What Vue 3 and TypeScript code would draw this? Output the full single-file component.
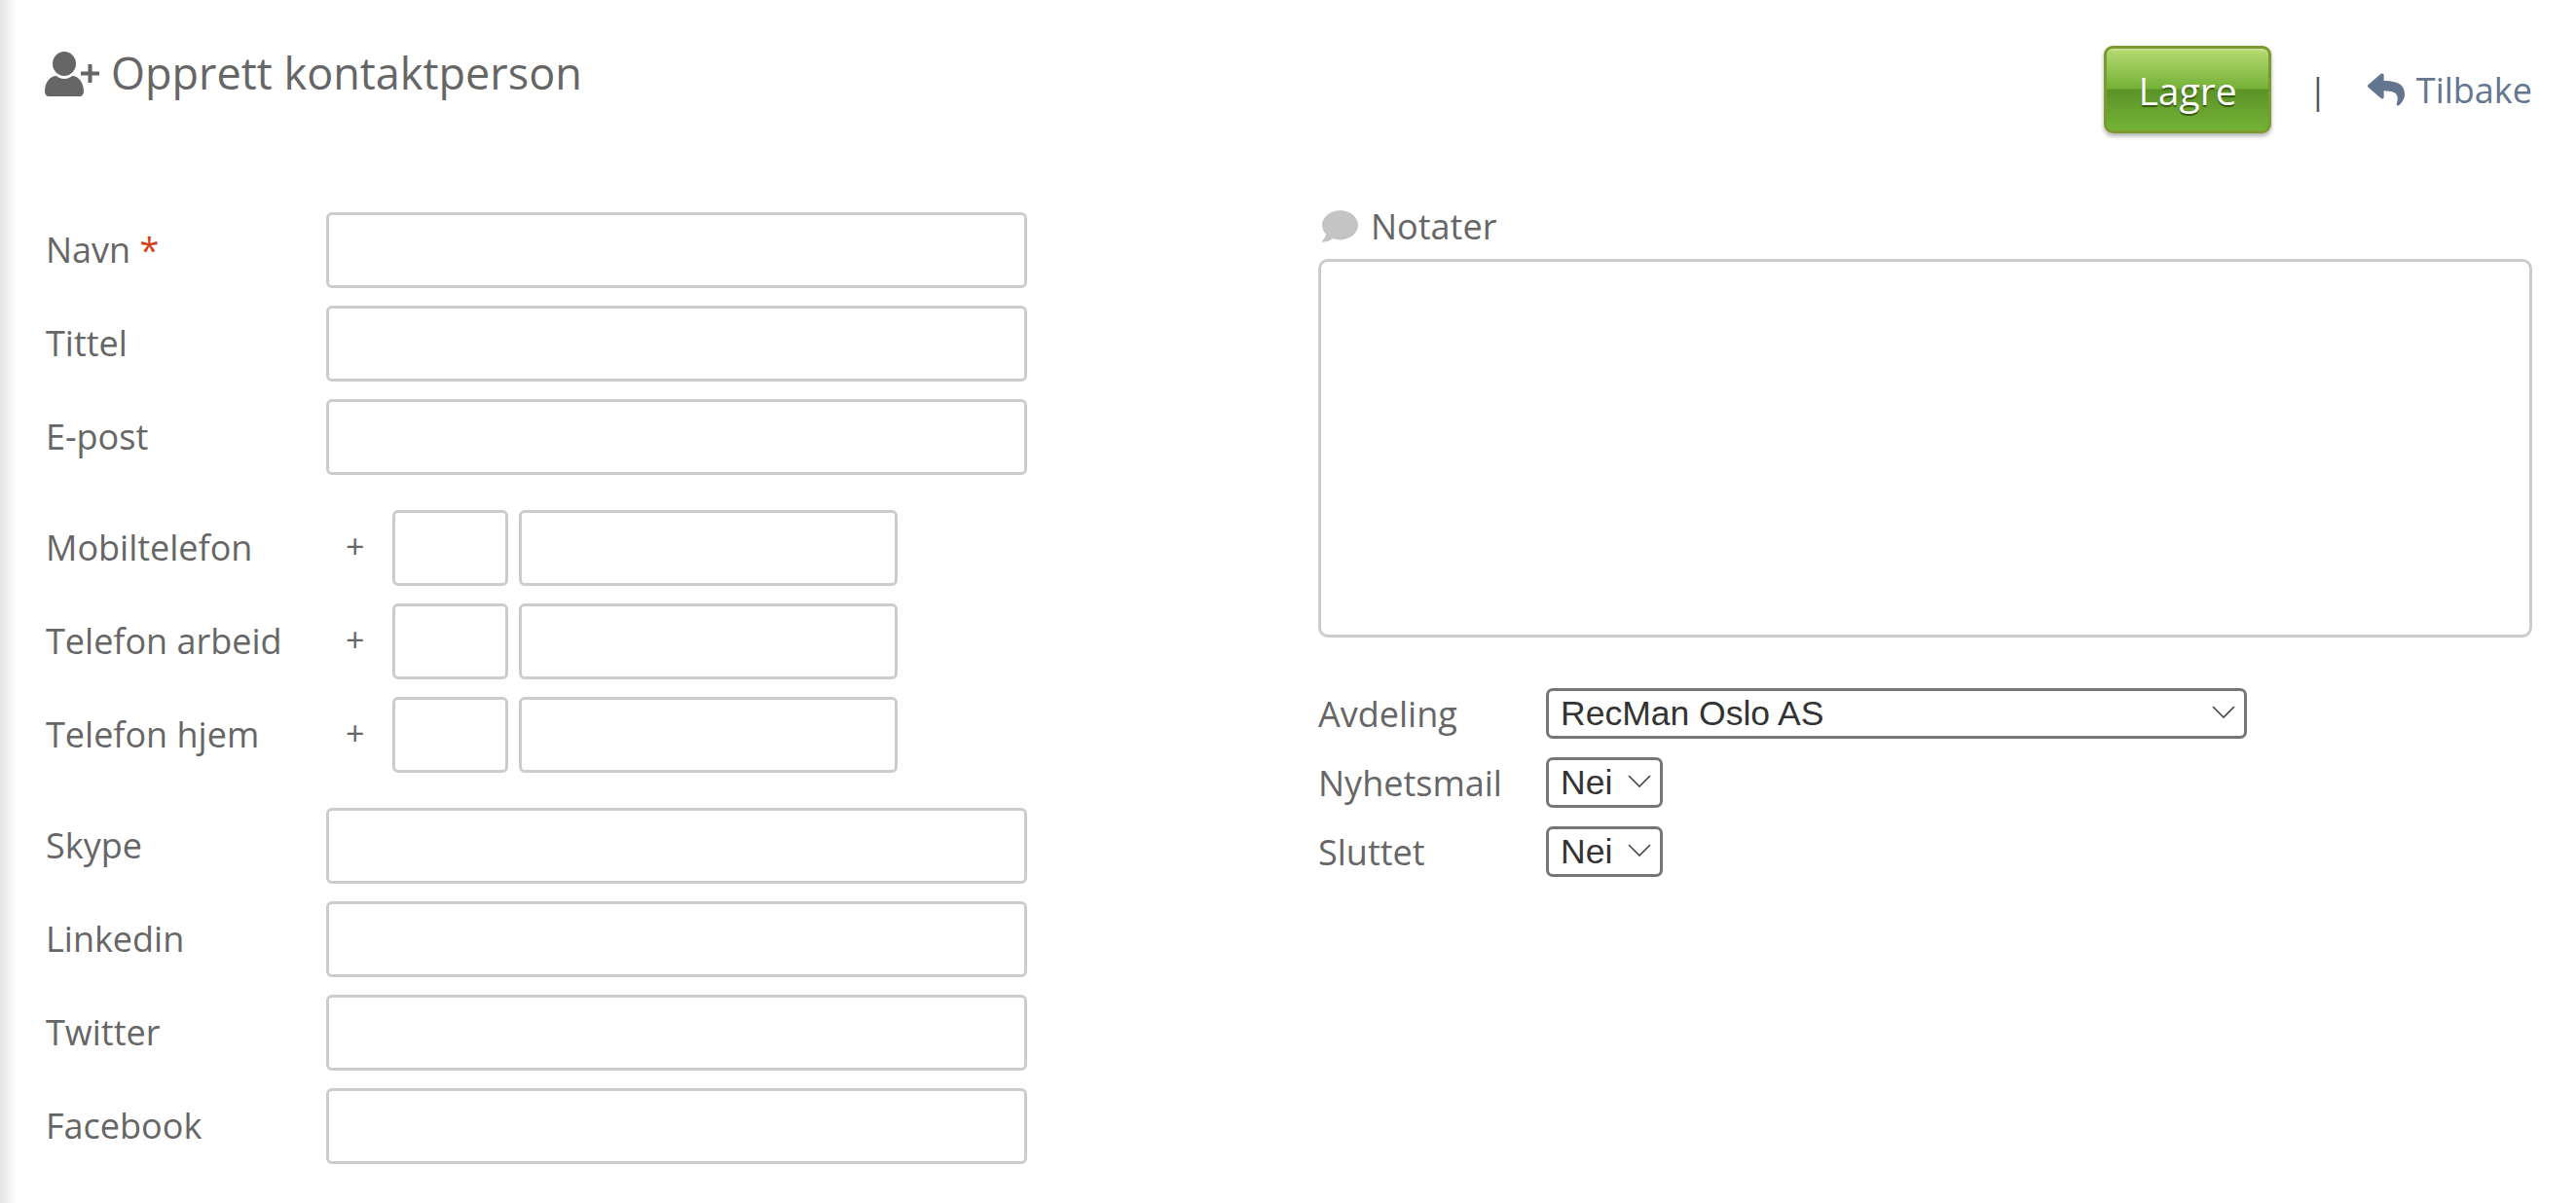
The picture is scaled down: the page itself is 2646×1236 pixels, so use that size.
<template>
  <div class="page">
    <header class="top">
      <h1 class="title">
        <svg class="user-icon" viewBox="0 0 56 46" aria-hidden="true">
          <ellipse cx="20" cy="12.5" rx="12" ry="12.5" />
          <path d="M0 41c0-9 5-16 12-16 2 2 5 3 8 3s6-1 8-3c7 0 12 7 12 16 0 3-2 5-4 5H4c-2 0-4-2-4-5z" />
          <path d="M37 20.5h19v4H37zM44.500 13h4v19h-4z" />
        </svg>
        <span class="title-text">Opprett kontaktperson</span>
      </h1>
      <div class="actions">
        <button class="save" type="button">Lagre</button>
        <span class="sep">|</span>
        <a class="back" href="#">
          <svg viewBox="0 0 512 512" aria-hidden="true">
            <path d="M8.309 189.836L184.313 37.851C199.719 24.546 224 35.347 224 56.015v80.053c160.629 1.839 288 34.032 288 186.258 0 61.441-39.581 122.309-83.333 154.132-13.653 9.931-33.111-2.533-28.077-18.631 45.344-145.012-21.507-183.51-176.59-185.742V360c0 20.7-24.3 31.453-39.687 18.164l-176.004-152c-11.071-9.562-11.086-26.753 0-36.328z" />
          </svg>
          Tilbake
        </a>
      </div>
    </header>

    <main class="columns">
      <section class="left">
        <div v-for="(group, i) in groups" :key="i" class="group">
          <div v-for="row in group.rows" :key="row" class="row">
            <label class="label">
              {{ row }}<span v-if="row === 'Navn'" class="req"> *</span>
            </label>
            <template v-if="group.phone">
              <span class="plus">+</span>
              <input class="input cc" type="text" />
              <input class="input number" type="text" />
            </template>
            <input v-else class="input wide" type="text" />
          </div>
        </div>
      </section>

      <section class="right">
        <div class="notes-label">
          <svg viewBox="0 0 512 512" aria-hidden="true">
            <path d="M256 32C114.600 32 0 125.100 0 240c0 49.600 21.400 95 57 130.700C44.500 421.100 2.700 466 2.200 466.500c-2.200 2.300-2.800 5.700-1.500 8.700S4.800 480 8 480c66.300 0 116-31.800 140.600-51.400 32.700 12.300 69 19.400 107.400 19.400 141.400 0 256-93.100 256-208S397.400 32 256 32z" />
          </svg>
          Notater
        </div>
        <textarea class="notes"></textarea>

        <div class="selects">
          <div v-for="s in selects" :key="s.label" class="select-row">
            <label class="select-label">{{ s.label }}</label>
            <div class="select-wrap" :class="{ long: s.long }">
              <select class="select">
                <option>{{ s.value }}</option>
              </select>
              <svg class="chevron" viewBox="0 0 24 13" aria-hidden="true">
                <path d="M1 1l11 11L23 1" />
              </svg>
            </div>
          </div>
        </div>
      </section>
    </main>
  </div>
</template>

<script setup lang="ts">
interface FieldGroup {
  rows: string[]
  phone?: boolean
}

const groups: FieldGroup[] = [
  { rows: ["Navn", "Tittel", "E-post"] },
  { rows: ["Mobiltelefon", "Telefon arbeid", "Telefon hjem"], phone: true },
  { rows: ["Skype", "Linkedin", "Twitter", "Facebook"] }
]

const selects = [
  { label: "Avdeling", value: "RecMan Oslo AS", long: true },
  { label: "Nyhetsmail", value: "Nei", long: false },
  { label: "Sluttet", value: "Nei", long: false }
]
</script>

<style>
html,
body {
  margin: 0;
  background: #fff;
}
</style>

<style scoped>
.page {
  box-sizing: border-box;
  height: 1236px;
  padding: 47px 45px 0 47px;
  font-family: "Open Sans", sans-serif;
  color: #666;
  background: linear-gradient(to right, #e4e4e4, #fff) no-repeat left top / 18px 100%;
}

.top {
  display: flex;
  justify-content: space-between;
  align-items: flex-start;
  height: 171px;
}

.title {
  display: flex;
  align-items: center;
  gap: 12px;
  margin: 0 0 0 -1px;
  height: 58px;
  font-size: 45px;
  font-weight: 400;
  color: #666;
}

.title-text {
  padding-bottom: 3px;
}

.user-icon {
  width: 56px;
  height: 46px;
  fill: #666;
}

.actions {
  display: flex;
  align-items: center;
  height: 90px;
}

.save {
  box-sizing: border-box;
  width: 172px;
  height: 90px;
  border: 3px solid #7b9a30;
  border-radius: 9px;
  background: linear-gradient(#b7da72, #74b137 49%, #5c9327 50%, #73b337);
  box-shadow: 0 3px 4px rgba(0, 0, 0, 0.3), inset 0 2px 0 rgba(255, 255, 255, 0.2);
  color: #fff;
  font-family: inherit;
  font-size: 39px;
  text-shadow: 0 2px 1px rgba(40, 70, 10, 0.8);
}

.sep {
  margin-left: 38px;
  font-size: 36px;
  color: #555;
}

.back {
  display: flex;
  align-items: center;
  gap: 12px;
  margin-left: 41px;
  font-size: 36px;
  color: #64768f;
  text-decoration: none;
}

.back svg {
  width: 38px;
  height: 38px;
  fill: #64768f;
}

.columns {
  display: grid;
  grid-template-columns: 1307px 1fr;
}

.left {
  display: flex;
  flex-direction: column;
  gap: 36px;
}

.group {
  display: flex;
  flex-direction: column;
  gap: 18px;
}

.row {
  display: flex;
  align-items: center;
  height: 78px;
}

.label {
  box-sizing: border-box;
  width: 288px;
  flex: none;
  padding-bottom: 1px;
  font-size: 36px;
}

.req {
  color: #d0421b;
}

.plus {
  width: 68px;
  flex: none;
  padding-left: 20px;
  box-sizing: border-box;
  font-size: 34px;
  position: relative;
  top: -2px;
}

.input {
  box-sizing: border-box;
  height: 78px;
  border: 3px solid #ccc;
  border-radius: 6px;
  background: #fff;
  outline: none;
}

.wide {
  width: 720px;
}

.cc {
  width: 119px;
  margin-right: 11px;
}

.number {
  width: 389px;
}

.notes-label {
  display: flex;
  align-items: center;
  gap: 13px;
  box-sizing: border-box;
  height: 48px;
  padding: 0 0 20px 4px;
  font-size: 36px;
}

.notes-label svg {
  width: 37px;
  height: 37px;
  fill: #c4c4c4;
}

.notes {
  display: block;
  box-sizing: border-box;
  width: 100%;
  height: 389px;
  border: 3px solid #ccc;
  border-radius: 10px;
  background: #fff;
  outline: none;
  resize: none;
}

.selects {
  display: flex;
  flex-direction: column;
  gap: 19px;
  margin-top: 52px;
}

.select-row {
  display: flex;
  align-items: center;
  height: 52px;
}

.select-label {
  width: 234px;
  flex: none;
  font-size: 36px;
}

.select-wrap {
  position: relative;
  width: 120px;
  height: 52px;
}

.select-wrap.long {
  width: 720px;
}

.select {
  appearance: none;
  box-sizing: border-box;
  width: 100%;
  height: 100%;
  padding: 0 0 0 12px;
  border: 3px solid #767676;
  border-radius: 7px;
  background: #fff;
  font-family: "Liberation Sans", Arial, sans-serif;
  font-size: 35.5px;
  color: #333;
  outline: none;
}

.chevron {
  position: absolute;
  right: 12px;
  top: 18px;
  width: 24px;
  height: 13px;
  fill: none;
  stroke: #444;
  stroke-width: 1.6;
  pointer-events: none;
}
</style>
